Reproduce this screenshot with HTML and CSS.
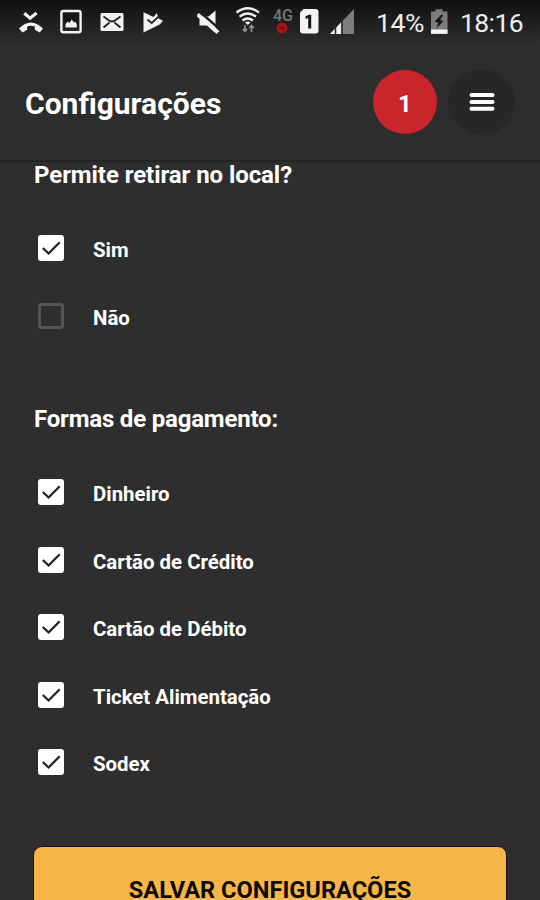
FILE: index.html
```html
<!DOCTYPE html>
<html lang="pt-BR">
<head>
<meta charset="utf-8">
<title>Configurações</title>
<link rel="stylesheet" href="styles.css">
</head>
<body>
<div class="status">
  <svg class="missed" width="24" height="44" viewBox="19 0 24 44"><path d="M24.300 13.200l5.800 5 6.500-5.200" fill="none" stroke="#f2f2f2" stroke-width="3.200"/><path d="M19 28.500q11.800-12 24 0l-3.300 3.900-4.900-2.700v-3.300q-4.400-1.300-7.600 0v3.300l-4.800 2.700z" fill="#f2f2f2"/></svg>
  <svg class="picture" width="22" height="44" viewBox="60 0 22 44"><rect x="61.400" y="11" width="19.200" height="21.300" rx="2" fill="none" stroke="#f2f2f2" stroke-width="2.400"/><rect x="64.700" y="14.500" width="12.800" height="13.500" fill="#141414"/><path d="M65.500 27.500v-3.500l2.300-2.500 1.700 1.500 2.200-3.500 2.200 3 1.200-1 1.700 2.500v3.500z" fill="#f2f2f2"/></svg>
  <svg class="mail" width="24" height="44" viewBox="100 0 24 44"><rect x="100.500" y="13" width="23" height="18" rx="1.500" fill="#f2f2f2"/><path d="M103.500 16.500l5.500 4q3 2 6 0l5.500-4M103.500 27.500l6-5M120.500 27.500l-6-5" fill="none" stroke="#222" stroke-width="1.900"/></svg>
  <svg class="play" width="20" height="44" viewBox="143 0 20 44"><path d="M143.500 12.200l10 4.800 3.300-4 1.800 5.500 4.400 2.300-3.200 3.700-16.300 8z" fill="#f2f2f2"/><path d="M147.500 19.500l4.200 3.500 7-6.500" fill="none" stroke="#292929" stroke-width="1.800"/></svg>
  <svg class="mute" width="22" height="44" viewBox="197 0 22 44"><path d="M199.500 16.500h9l7-6v22.500l-8.500-7.500h-7.500z" fill="#f2f2f2"/><path d="M199.500 11.500l20 17.500" stroke="#1f1f1f" stroke-width="2.400"/><path d="M197.500 14.500l20.500 18" stroke="#f2f2f2" stroke-width="3.800"/></svg>
  <svg class="wifi" width="25" height="44" viewBox="235 0 25 44"><g fill="none" stroke="#f2f2f2" stroke-width="2.300"><path d="M236.500 12.500q11.200-8.500 22.500 0"/><path d="M239.500 16.600q8.200-6.200 16.500 0"/><path d="M242.600 20.500q5.100-4 10.300 0"/></g><path d="M245 22.500q2.800-1.800 5.500 0l-2.700 2.500z" fill="#f2f2f2"/><path d="M245 25v6.500m-2-2.500l2 2.500 2-2.500M251.500 32v-6.500m-2.200 2.500l2.200-2.500 2.200 2.500" fill="none" stroke="#929292" stroke-width="1.700"/></svg>
  <div class="network"><span class="lte">4G</span><svg width="12" height="12" viewBox="0 0 12 12"><circle cx="6" cy="6" r="5.500" fill="#a71419"/><path d="M3.500 5.500h4v3" fill="none" stroke="#5c0d10" stroke-width="1.300"/></svg></div>
  <svg class="sim" width="20" height="44" viewBox="299 0 20 44"><path d="M303.500 9h12q3 0 3 3v18.500q0 3-3 3h-12.500q-3 0-3-3v-18z" fill="#f4f4f4"/><path d="M305.500 16.300l3.500-1.600h2.200v13.800h-3v-10.500l-2.700 1z" fill="#161616"/></svg>
  <svg class="signal" width="24" height="44" viewBox="330 0 24 44"><path d="M330 34l24-25v25z" fill="#7d7d7d"/><path d="M330 34l11-11.500v11.500z" fill="#f2f2f2"/><path d="M335.500 25v9M342 18v16" stroke="#292929" stroke-width="1.500"/></svg>
  <span class="percent">14%</span>
  <svg class="battery" width="17" height="44" viewBox="431 0 17 44"><path d="M431 11.500h4.500v-2.300h7v2.300h5v22.300h-16.500z" fill="#7c7c7c"/><path d="M431 29.500h16.500v4.300h-16.500z" fill="#f5f5f5"/><path d="M441.500 14.500l-6.800 7 3.600 1.200-1.800 5.600 7-7.300-3.500-1 3-4.500z" fill="#161616"/></svg>
  <span class="clock">18:16</span>
</div>
<header class="header">
  <h1 class="title">Configurações</h1>
  <span class="badge">1</span>
  <button class="menu" aria-label="Menu"><svg width="26" height="20" viewBox="0 0 26 20"><path d="M2.500 3h21M2.500 10h21M2.500 16.800h21" stroke="#fff" stroke-width="4" stroke-linecap="round"/></svg></button>
</header>
<main class="content">
  <section class="group">
    <h2 class="heading pickup">Permite retirar no local?</h2>
    <div class="row"><span class="box checked"><svg viewBox="0 0 26 26"><path d="M4.800 13l5.800 5.500L21.700 7.200"/></svg></span><span class="label">Sim</span></div>
    <div class="row"><span class="box"></span><span class="label">Não</span></div>
  </section>
  <section class="group">
    <h2 class="heading payment">Formas de pagamento:</h2>
    <div class="row"><span class="box checked"><svg viewBox="0 0 26 26"><path d="M4.800 13l5.800 5.500L21.700 7.200"/></svg></span><span class="label">Dinheiro</span></div>
    <div class="row"><span class="box checked"><svg viewBox="0 0 26 26"><path d="M4.800 13l5.800 5.500L21.700 7.200"/></svg></span><span class="label">Cartão de Crédito</span></div>
    <div class="row"><span class="box checked"><svg viewBox="0 0 26 26"><path d="M4.800 13l5.800 5.500L21.700 7.200"/></svg></span><span class="label">Cartão de Débito</span></div>
    <div class="row"><span class="box checked"><svg viewBox="0 0 26 26"><path d="M4.800 13l5.800 5.500L21.700 7.200"/></svg></span><span class="label">Ticket Alimentação</span></div>
    <div class="row"><span class="box checked"><svg viewBox="0 0 26 26"><path d="M4.800 13l5.800 5.500L21.700 7.200"/></svg></span><span class="label">Sodex</span></div>
  </section>
  <button class="save">SALVAR CONFIGURAÇÕES</button>
</main>
</body>
</html>
```
FILE: styles.css
```css
* { box-sizing: border-box; }
html, body { height: 100%; }
body { margin: 0; display: flex; flex-direction: column; overflow: hidden; background: #2e2e2e; color: #fff; font-family: Roboto, sans-serif; }
h1, h2 { margin: 0; font-weight: 700; }
button { border: 0; padding: 0; font-family: inherit; }
svg { display: block; flex: none; }
.status { flex: none; display: flex; height: 45px; padding-left: 19px; background: linear-gradient(#111, #2b2b2b 42px, #2d2d2d); }
.picture { margin-left: 17px; }
.mail { margin-left: 18px; }
.play { margin-left: 19px; }
.mute { margin-left: 34px; }
.wifi { margin-left: 16px; }
.network { display: flex; flex-direction: column; width: 24px; margin-left: 13px; padding-top: 9px; }
.network svg { margin-left: 3px; }
.lte { height: 13px; color: #777; font-size: 16px; line-height: 13px; font-weight: 500; }
.sim { margin-left: 2px; }
.signal { margin-left: 11px; }
.percent, .clock { color: #eee; font-size: 26.5px; line-height: 46px; letter-spacing: -0.4px; white-space: nowrap; }
.percent { width: 54px; margin-left: 22px; }
.battery { margin-left: 1px; }
.clock { margin-left: 12px; letter-spacing: -0.6px; }
.header { flex: none; display: flex; align-items: center; height: 117px; padding: 0 25px 2px; border-bottom: 2px solid #252525; background: #2d2d2d; }
.title { flex: 1; padding-top: 4px; font-size: 30px; line-height: 36px; }
.badge { display: grid; place-items: center; width: 64px; height: 64px; padding-top: 4px; border-radius: 50%; background: #ca252b; font-size: 24px; font-weight: 700; }
.menu { display: grid; place-items: center; width: 67px; height: 66px; margin-left: 11px; border-radius: 50%; background: #272727; }
.content { flex: none; padding: 0 33px; }
.group { margin-bottom: 56.6px; }
.group:nth-of-type(2) { margin-bottom: 49.4px; }
.heading { height: 26px; margin-bottom: 26.2px; padding-left: 1px; font-size: 24px; line-height: 26px; letter-spacing: -0.07px; white-space: nowrap; }
.payment { letter-spacing: -0.19px; }
.row { display: flex; align-items: center; height: 67.6px; padding-left: 5px; }
.box { flex: none; width: 26px; height: 26px; border: 3px solid #555; border-radius: 3px; }
.checked { border: 0; background: #fff; }
.box path { fill: none; stroke: #222; stroke-width: 2.3; }
.label { margin-left: 29px; padding-top: 4px; font-size: 20.4px; font-weight: 700; line-height: 24px; white-space: nowrap; }
.save { display: block; width: 474px; height: 89px; border: 1px solid #111522; border-radius: 9px; background: #f8b648; color: #0d0a05; font-size: 23.6px; font-weight: 700; }
```
